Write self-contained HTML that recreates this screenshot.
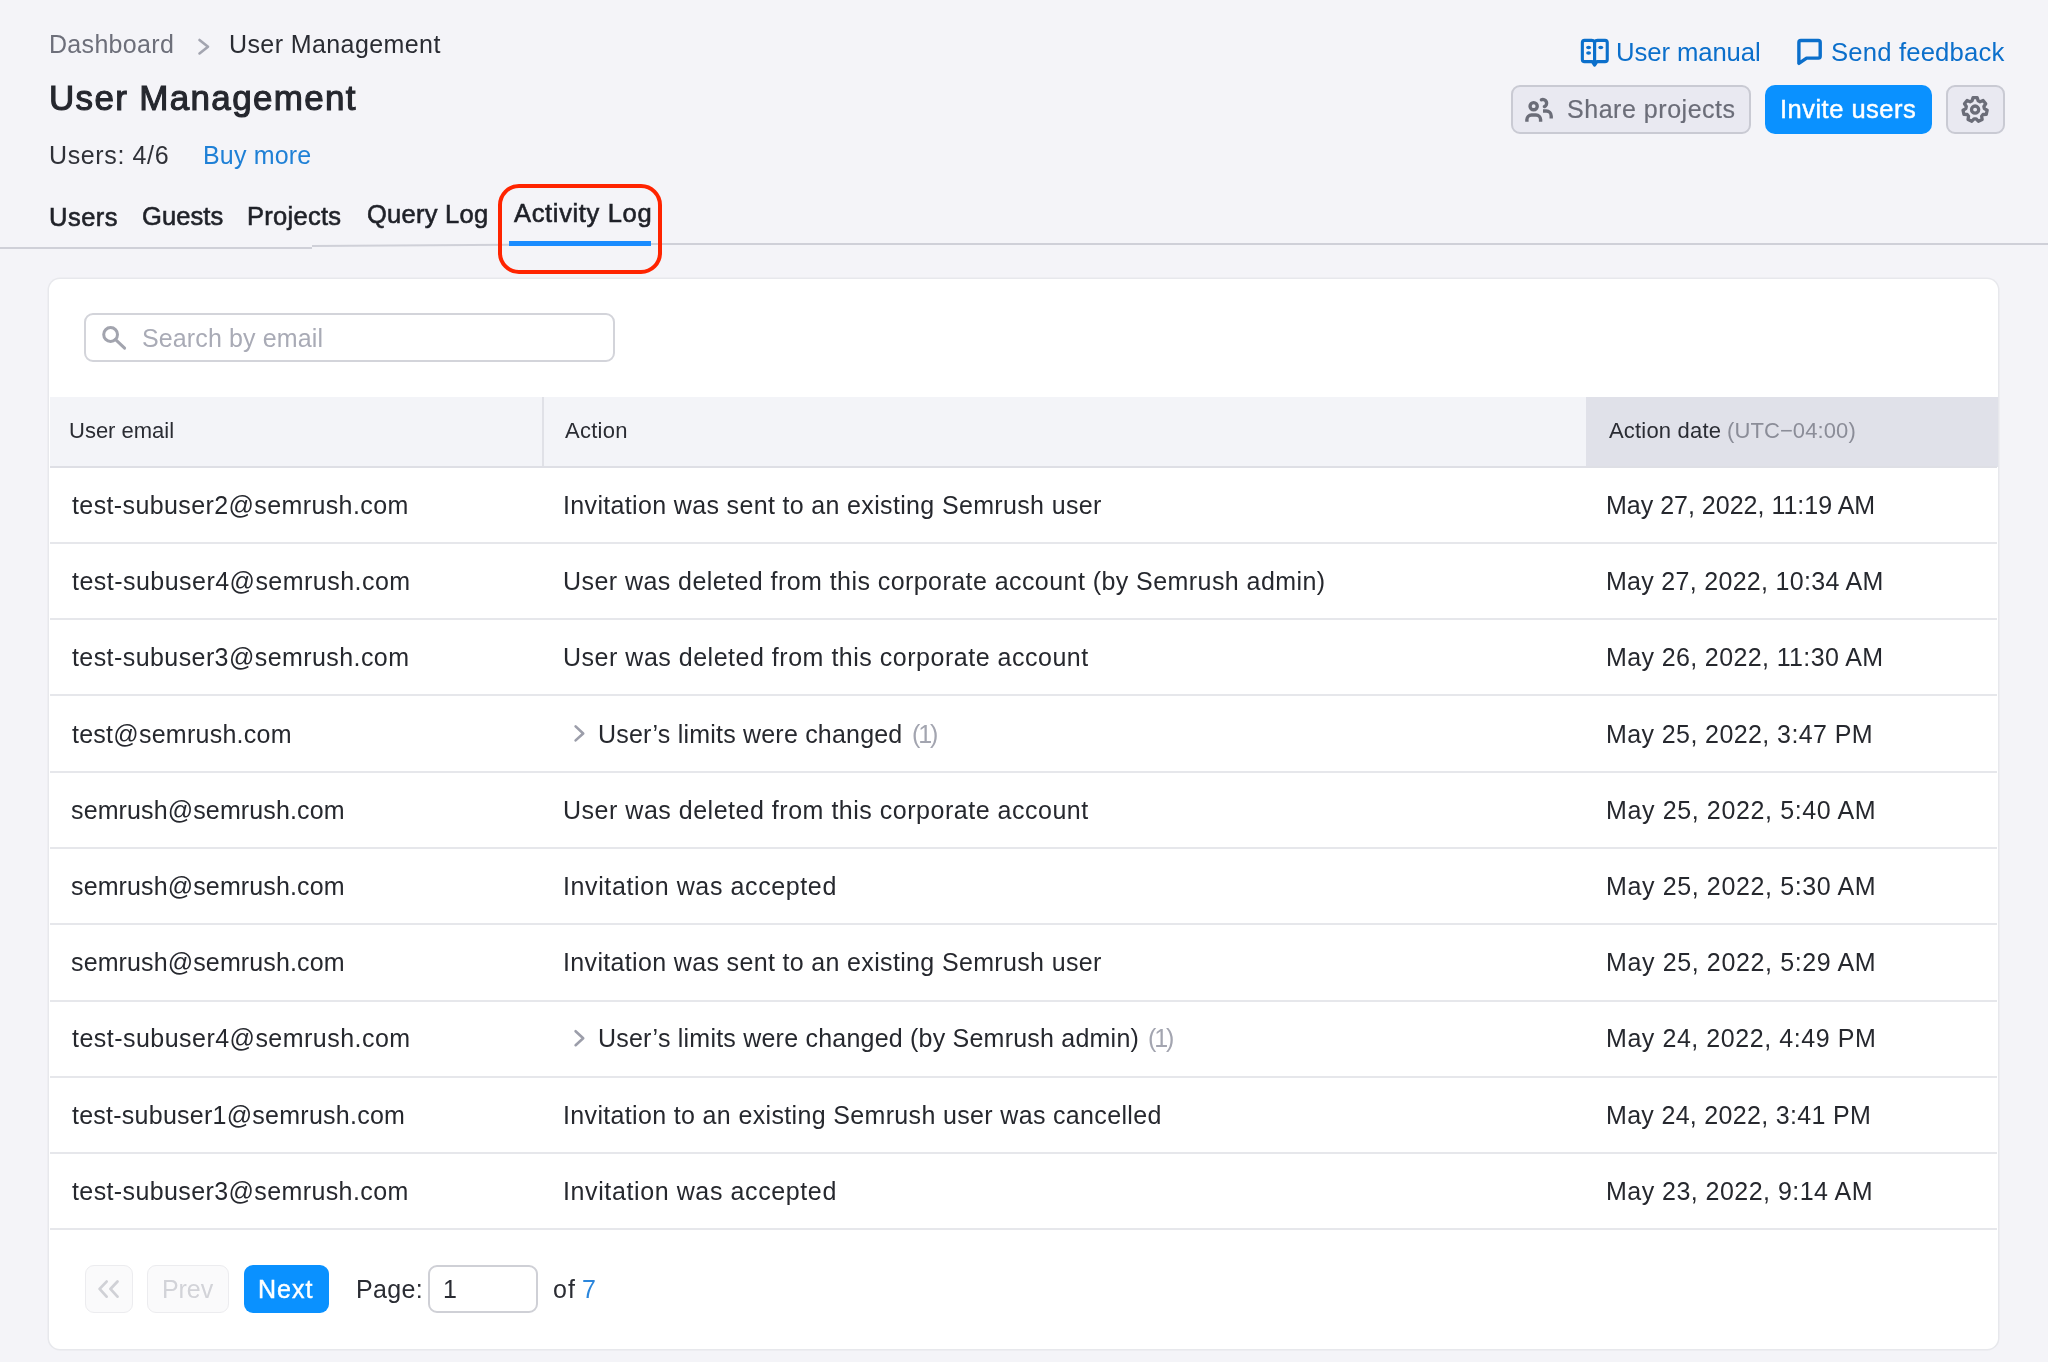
<!DOCTYPE html>
<html><head><meta charset="utf-8"><style>
html,body{margin:0;padding:0;}
body{width:2048px;height:1362px;background:#f4f4f8;position:relative;overflow:hidden;font-family:"Liberation Sans", sans-serif;}
.t{position:absolute;white-space:nowrap;line-height:60px;font-family:"Liberation Sans", sans-serif;will-change:transform;}
.a{position:absolute;box-sizing:border-box;}
</style></head><body>
<!-- breadcrumb chevron -->
<svg class="a" style="left:0;top:0" width="2048" height="300" viewBox="0 0 2048 300">
  <polyline points="199.5,40 208,46.7 199.5,53.4" fill="none" stroke="#a3a5b0" stroke-width="2.6" stroke-linecap="round" stroke-linejoin="round"/>
</svg>
<!-- tab separator -->
<div class="a" style="left:0;top:246.6px;width:312px;height:2px;background:#cfd0d8"></div>
<div class="a" style="left:312px;top:245px;width:200px;height:2px;background:#cfd0d8;transform:rotate(-0.35deg);transform-origin:0 0"></div>
<div class="a" style="left:510px;top:243.3px;width:1538px;height:2px;background:#cfd0d8"></div>
<!-- active tab underline -->
<div class="a" style="left:509px;top:240.5px;width:142px;height:5px;background:#1a8cff"></div>
<!-- red highlight -->
<div class="a" style="left:498px;top:184px;width:164px;height:89.5px;border:4.6px solid #ff2400;border-radius:21px"></div>

<!-- top-right icons -->
<svg class="a" style="left:1575px;top:33px" width="40" height="37" viewBox="0 0 40 37">
  <path d="M7.35 9.6 Q7.35 7.35 9.6 7.35 H16.6 Q18.6 7.35 19.6 8.7 Q20.6 7.35 22.6 7.35 H30 Q32.25 7.35 32.25 9.6 V26.4 Q32.25 28.65 30 28.65 H21.9 L19.6 32.2 L17.3 28.65 H9.6 Q7.35 28.65 7.35 26.4 Z" fill="none" stroke="#0b6fcb" stroke-width="3.1" stroke-linejoin="round"/>
  <line x1="19.6" y1="8.6" x2="19.6" y2="29.5" stroke="#0b6fcb" stroke-width="3.2"/>
  <ellipse cx="13.6" cy="14.5" rx="2.45" ry="1.7" fill="#0b6fcb"/>
  <ellipse cx="13.6" cy="20" rx="2.45" ry="1.7" fill="#0b6fcb"/>
  <ellipse cx="25.8" cy="14.5" rx="2.45" ry="1.7" fill="#0b6fcb"/>
</svg>
<svg class="a" style="left:1792px;top:33px" width="36" height="37" viewBox="0 0 36 37">
  <path d="M6.9 9.4 Q6.9 7.5 8.8 7.5 H26.3 Q28.2 7.5 28.2 9.4 V23.2 Q28.2 25.1 26.3 25.1 H14.6 L6.9 30.4 Z" fill="none" stroke="#0b6fcb" stroke-width="3.4" stroke-linejoin="round"/>
</svg>

<!-- Share projects button -->
<div class="a" style="left:1511px;top:85px;width:240px;height:49px;background:#e9e9f1;border:2px solid #c9cad3;border-radius:9px"></div>
<svg class="a" style="left:1515px;top:90px" width="50" height="40" viewBox="0 0 50 40">
  <g fill="none" stroke="#6b6d78" stroke-width="3.4">
  <circle cx="18.65" cy="16.2" r="3.6"/>
  <path d="M11.9 31.8 V29.6 A4.6 4.6 0 0 1 16.5 25 H21 A4.6 4.6 0 0 1 25.6 29.6 V31.8"/>
  <path d="M26.4 9.8 A3.7 3.7 0 1 1 29.4 16.6" stroke-linecap="round"/>
  <path d="M28 21 H31.3 A4.9 4.9 0 0 1 36.2 25.9 V28.4"/>
  </g>
</svg>
<!-- Invite users -->
<div class="a" style="left:1765px;top:85px;width:167px;height:49px;background:#0a91ff;border-radius:10px"></div>
<!-- settings -->
<div class="a" style="left:1946px;top:85px;width:59px;height:49px;background:#e9e9f1;border:2px solid #c9cad3;border-radius:9px"></div>
<svg class="a" style="left:1950px;top:90px" width="50" height="40" viewBox="0 0 50 40">
  <g fill="none" stroke="#6b6d78" stroke-width="3.3" stroke-linejoin="round">
    <path d="M22.07 10.81 L23.00 7.68 L27.20 7.68 L28.13 10.81 L30.09 11.75 L33.11 10.53 L35.73 13.81 L33.86 16.48 L34.35 18.60 L37.18 20.20 L36.25 24.30 L33.00 24.51 L31.64 26.21 L32.16 29.42 L28.38 31.25 L26.19 28.84 L24.01 28.84 L21.82 31.25 L18.04 29.42 L18.56 26.21 L17.20 24.51 L13.95 24.30 L13.02 20.20 L15.85 18.60 L16.34 16.48 L14.47 13.81 L17.09 10.53 L20.11 11.75 Z"/>
    <circle cx="25.1" cy="19.6" r="3.6"/>
  </g>
</svg>

<!-- card -->
<div class="a" style="left:49px;top:279px;width:1949px;height:1070px;background:#fff;border-radius:11px;box-shadow:0 0 0 1.5px #e7e8ec, 0 1px 2px rgba(0,0,0,0.03)"></div>
<!-- search -->
<div class="a" style="left:84px;top:313px;width:531px;height:49px;border:2px solid #d3d4da;border-radius:9px;background:#fff"></div>
<svg class="a" style="left:95px;top:318px" width="40" height="40" viewBox="0 0 40 40">
  <circle cx="15.6" cy="16.5" r="6.9" fill="none" stroke="#a2a4ae" stroke-width="3"/>
  <line x1="20.6" y1="21.6" x2="29.6" y2="30.2" stroke="#a2a4ae" stroke-width="3" stroke-linecap="round"/>
</svg>
<!-- table header -->
<div class="a" style="left:50px;top:396.5px;width:1948px;height:70px;background:#f3f4f8"></div>
<div class="a" style="left:1586px;top:396.5px;width:412px;height:70px;background:#e0e1e9"></div>
<div class="a" style="left:542px;top:396.5px;width:2.2px;height:70px;background:#e0e1e7"></div>
<!-- row lines -->
<div class="a" style="left:50px;top:465.5px;width:1947px;height:2px;background:#dedfe5"></div>
<div class="a" style="left:50px;top:541.79px;width:1947px;height:2px;background:#e6e7eb"></div>
<div class="a" style="left:50px;top:618.08px;width:1947px;height:2px;background:#e6e7eb"></div>
<div class="a" style="left:50px;top:694.37px;width:1947px;height:2px;background:#e6e7eb"></div>
<div class="a" style="left:50px;top:770.66px;width:1947px;height:2px;background:#e6e7eb"></div>
<div class="a" style="left:50px;top:846.95px;width:1947px;height:2px;background:#e6e7eb"></div>
<div class="a" style="left:50px;top:923.24px;width:1947px;height:2px;background:#e6e7eb"></div>
<div class="a" style="left:50px;top:999.53px;width:1947px;height:2px;background:#e6e7eb"></div>
<div class="a" style="left:50px;top:1075.82px;width:1947px;height:2px;background:#e6e7eb"></div>
<div class="a" style="left:50px;top:1152.11px;width:1947px;height:2px;background:#e6e7eb"></div>
<div class="a" style="left:50px;top:1228.40px;width:1947px;height:2px;background:#e6e7eb"></div>

<!-- chevrons in rows -->
<svg class="a" style="left:0;top:0" width="700" height="1362" viewBox="0 0 700 1362">
  <polyline points="575.6,1031.2 583.2,1038.3 575.6,1045.2" fill="none" stroke="#9c9eaa" stroke-width="2.6" stroke-linecap="round" stroke-linejoin="round"/>
  <polyline points="575.6,726.4 583.2,733.5 575.6,740.4" fill="none" stroke="#9c9eaa" stroke-width="2.6" stroke-linecap="round" stroke-linejoin="round"/>
</svg>
<!-- pagination -->
<div class="a" style="left:85px;top:1265px;width:48px;height:48px;border:1.5px solid #ececef;border-radius:9px;background:#fafafb"></div>
<svg class="a" style="left:90px;top:1270px" width="40" height="40" viewBox="0 0 40 40">
  <polyline points="16.6,11.6 9.6,18.9 16.6,26.6" fill="none" stroke="#d0d1d6" stroke-width="2.8" stroke-linecap="round" stroke-linejoin="round"/>
  <polyline points="27.5,11.6 20.4,18.9 27.5,26.6" fill="none" stroke="#d0d1d6" stroke-width="2.8" stroke-linecap="round" stroke-linejoin="round"/>
</svg>
<div class="a" style="left:147px;top:1265px;width:82px;height:48px;border:1.5px solid #ececef;border-radius:9px;background:#fafafb"></div>
<div class="a" style="left:243.5px;top:1265px;width:85.5px;height:48px;background:#0a91ff;border-radius:9px"></div>
<div class="a" style="left:428px;top:1265px;width:110px;height:48px;border:2px solid #cfd0d6;border-radius:9px;background:#fff"></div>

<div class='t' style='left:49.30px;top:14.00px;font-size:25px;font-weight:400;letter-spacing:0.3125px;color:#6d6f7a;'>Dashboard</div><div class='t' style='left:228.70px;top:14.00px;font-size:25px;font-weight:400;letter-spacing:0.40625px;color:#2a2c33;'>User Management</div><div class='t' style='left:49.00px;top:68.00px;font-size:35px;font-weight:400;letter-spacing:1.328125px;color:#25272e;-webkit-text-stroke:1.1px #25272e;'>User Management</div><div class='t' style='left:49.00px;top:124.80px;font-size:25px;font-weight:400;letter-spacing:0.625px;color:#2f3138;'>Users: 4/6</div><div class='t' style='left:203.00px;top:124.80px;font-size:25px;font-weight:400;letter-spacing:0.15625px;color:#1f80d6;'>Buy more</div><div class='t' style='left:48.90px;top:187.00px;font-size:25.5px;font-weight:400;letter-spacing:0.5px;color:#1f2128;-webkit-text-stroke:0.6px #1f2128;'>Users</div><div class='t' style='left:142.00px;top:186.30px;font-size:25.5px;font-weight:400;letter-spacing:0.078125px;color:#1f2128;-webkit-text-stroke:0.6px #1f2128;'>Guests</div><div class='t' style='left:246.90px;top:185.50px;font-size:25.5px;font-weight:400;letter-spacing:0.28125px;color:#1f2128;-webkit-text-stroke:0.6px #1f2128;'>Projects</div><div class='t' style='left:367.00px;top:183.80px;font-size:25.5px;font-weight:400;letter-spacing:0.25px;color:#1f2128;-webkit-text-stroke:0.6px #1f2128;'>Query Log</div><div class='t' style='left:513.50px;top:183.30px;font-size:25.5px;font-weight:400;letter-spacing:0.65625px;color:#1f2128;-webkit-text-stroke:0.6px #1f2128;'>Activity Log</div><div class='t' style='left:1615.80px;top:21.80px;font-size:25.7px;font-weight:400;letter-spacing:-0.09375px;color:#0b6fcb;'>User manual</div><div class='t' style='left:1830.90px;top:22.30px;font-size:25.7px;font-weight:400;letter-spacing:0.15625px;color:#0b6fcb;'>Send feedback</div><div class='t' style='left:1566.90px;top:78.70px;font-size:25px;font-weight:400;letter-spacing:0.53125px;color:#6b6d78;-webkit-text-stroke:0.2px #6b6d78;'>Share projects</div><div class='t' style='left:1780.30px;top:78.70px;font-size:25.5px;font-weight:400;letter-spacing:0.484375px;color:#ffffff;-webkit-text-stroke:0.45px #ffffff;'>Invite users</div><div class='t' style='left:141.80px;top:307.50px;font-size:25px;font-weight:400;letter-spacing:0.125px;color:#a9abb6;'>Search by email</div><div class='t' style='left:69.30px;top:401.30px;font-size:22px;font-weight:400;letter-spacing:0.0px;color:#2a2c33;'>User email</div><div class='t' style='left:565.20px;top:401.30px;font-size:22px;font-weight:400;letter-spacing:0.25px;color:#2a2c33;'>Action</div><div class='t' style='left:1609.20px;top:400.90px;font-size:22px;font-weight:400;letter-spacing:0.1875px;color:#2a2c33;'>Action date</div><div class='t' style='left:1727.00px;top:400.90px;font-size:22px;font-weight:400;letter-spacing:0.09375px;color:#8b8d98;'>(UTC−04:00)</div><div class='t' style='left:72.00px;top:475.00px;font-size:25px;font-weight:400;letter-spacing:0.390625px;color:#26282e;'>test-subuser2@semrush.com</div><div class='t' style='left:563.00px;top:475.00px;font-size:25px;font-weight:400;letter-spacing:0.34375px;color:#26282e;'>Invitation was sent to an existing Semrush user</div><div class='t' style='left:1606.00px;top:475.00px;font-size:25px;font-weight:400;letter-spacing:0.0px;color:#26282e;'>May 27, 2022, 11:19 AM</div><div class='t' style='left:72.00px;top:551.20px;font-size:25px;font-weight:400;letter-spacing:0.46875px;color:#26282e;'>test-subuser4@semrush.com</div><div class='t' style='left:563.00px;top:551.20px;font-size:25px;font-weight:400;letter-spacing:0.4375px;color:#26282e;'>User was deleted from this corporate account (by Semrush admin)</div><div class='t' style='left:1606.00px;top:551.20px;font-size:25px;font-weight:400;letter-spacing:0.296875px;color:#26282e;'>May 27, 2022, 10:34 AM</div><div class='t' style='left:72.00px;top:627.40px;font-size:25px;font-weight:400;letter-spacing:0.421875px;color:#26282e;'>test-subuser3@semrush.com</div><div class='t' style='left:563.00px;top:627.40px;font-size:25px;font-weight:400;letter-spacing:0.515625px;color:#26282e;'>User was deleted from this corporate account</div><div class='t' style='left:1606.00px;top:627.40px;font-size:25px;font-weight:400;letter-spacing:0.375px;color:#26282e;'>May 26, 2022, 11:30 AM</div><div class='t' style='left:72.00px;top:703.60px;font-size:25px;font-weight:400;letter-spacing:0.25px;color:#26282e;'>test@semrush.com</div><div class='t' style='left:598.30px;top:703.60px;font-size:25px;font-weight:400;letter-spacing:0.203125px;color:#26282e;'>User’s limits were changed</div><div class='t' style='left:911.60px;top:703.60px;font-size:25px;font-weight:400;letter-spacing:-2.15625px;color:#a3a5b0;'>(1)</div><div class='t' style='left:1606.00px;top:703.60px;font-size:25px;font-weight:400;letter-spacing:0.40625px;color:#26282e;'>May 25, 2022, 3:47 PM</div><div class='t' style='left:71.00px;top:779.80px;font-size:25px;font-weight:400;letter-spacing:0.125px;color:#26282e;'>semrush@semrush.com</div><div class='t' style='left:563.00px;top:779.80px;font-size:25px;font-weight:400;letter-spacing:0.515625px;color:#26282e;'>User was deleted from this corporate account</div><div class='t' style='left:1606.00px;top:779.80px;font-size:25px;font-weight:400;letter-spacing:0.625px;color:#26282e;'>May 25, 2022, 5:40 AM</div><div class='t' style='left:71.00px;top:856.00px;font-size:25px;font-weight:400;letter-spacing:0.125px;color:#26282e;'>semrush@semrush.com</div><div class='t' style='left:563.00px;top:856.00px;font-size:25px;font-weight:400;letter-spacing:0.609375px;color:#26282e;'>Invitation was accepted</div><div class='t' style='left:1606.00px;top:856.00px;font-size:25px;font-weight:400;letter-spacing:0.625px;color:#26282e;'>May 25, 2022, 5:30 AM</div><div class='t' style='left:71.00px;top:932.20px;font-size:25px;font-weight:400;letter-spacing:0.125px;color:#26282e;'>semrush@semrush.com</div><div class='t' style='left:563.00px;top:932.20px;font-size:25px;font-weight:400;letter-spacing:0.34375px;color:#26282e;'>Invitation was sent to an existing Semrush user</div><div class='t' style='left:1606.00px;top:932.20px;font-size:25px;font-weight:400;letter-spacing:0.625px;color:#26282e;'>May 25, 2022, 5:29 AM</div><div class='t' style='left:72.00px;top:1008.40px;font-size:25px;font-weight:400;letter-spacing:0.46875px;color:#26282e;'>test-subuser4@semrush.com</div><div class='t' style='left:598.30px;top:1008.40px;font-size:25px;font-weight:400;letter-spacing:0.21875px;color:#26282e;'>User’s limits were changed (by Semrush admin)</div><div class='t' style='left:1147.90px;top:1008.40px;font-size:25px;font-weight:400;letter-spacing:-2.09375px;color:#a3a5b0;'>(1)</div><div class='t' style='left:1606.00px;top:1008.40px;font-size:25px;font-weight:400;letter-spacing:0.5625px;color:#26282e;'>May 24, 2022, 4:49 PM</div><div class='t' style='left:72.00px;top:1084.60px;font-size:25px;font-weight:400;letter-spacing:0.25px;color:#26282e;'>test-subuser1@semrush.com</div><div class='t' style='left:563.00px;top:1084.60px;font-size:25px;font-weight:400;letter-spacing:0.34375px;color:#26282e;'>Invitation to an existing Semrush user was cancelled</div><div class='t' style='left:1606.00px;top:1084.60px;font-size:25px;font-weight:400;letter-spacing:0.3125px;color:#26282e;'>May 24, 2022, 3:41 PM</div><div class='t' style='left:72.00px;top:1160.80px;font-size:25px;font-weight:400;letter-spacing:0.390625px;color:#26282e;'>test-subuser3@semrush.com</div><div class='t' style='left:563.00px;top:1160.80px;font-size:25px;font-weight:400;letter-spacing:0.609375px;color:#26282e;'>Invitation was accepted</div><div class='t' style='left:1606.00px;top:1160.80px;font-size:25px;font-weight:400;letter-spacing:0.46875px;color:#26282e;'>May 23, 2022, 9:14 AM</div><div class='t' style='left:161.70px;top:1259.10px;font-size:25px;font-weight:400;letter-spacing:-0.078125px;color:#d2d3d8;'>Prev</div><div class='t' style='left:258.00px;top:1259.10px;font-size:25px;font-weight:400;letter-spacing:1.0px;color:#ffffff;-webkit-text-stroke:0.45px #ffffff;'>Next</div><div class='t' style='left:355.80px;top:1258.90px;font-size:25px;font-weight:400;letter-spacing:0.34375px;color:#2a2c33;'>Page:</div><div class='t' style='left:442.60px;top:1258.90px;font-size:25px;font-weight:400;letter-spacing:-6.3125px;color:#2a2c33;'>1</div><div class='t' style='left:553.00px;top:1258.90px;font-size:25px;font-weight:400;letter-spacing:1.0px;color:#2a2c33;'>of</div><div class='t' style='left:582.40px;top:1258.90px;font-size:25px;font-weight:400;letter-spacing:-1.1875px;color:#2b86dc;'>7</div>
</body></html>
